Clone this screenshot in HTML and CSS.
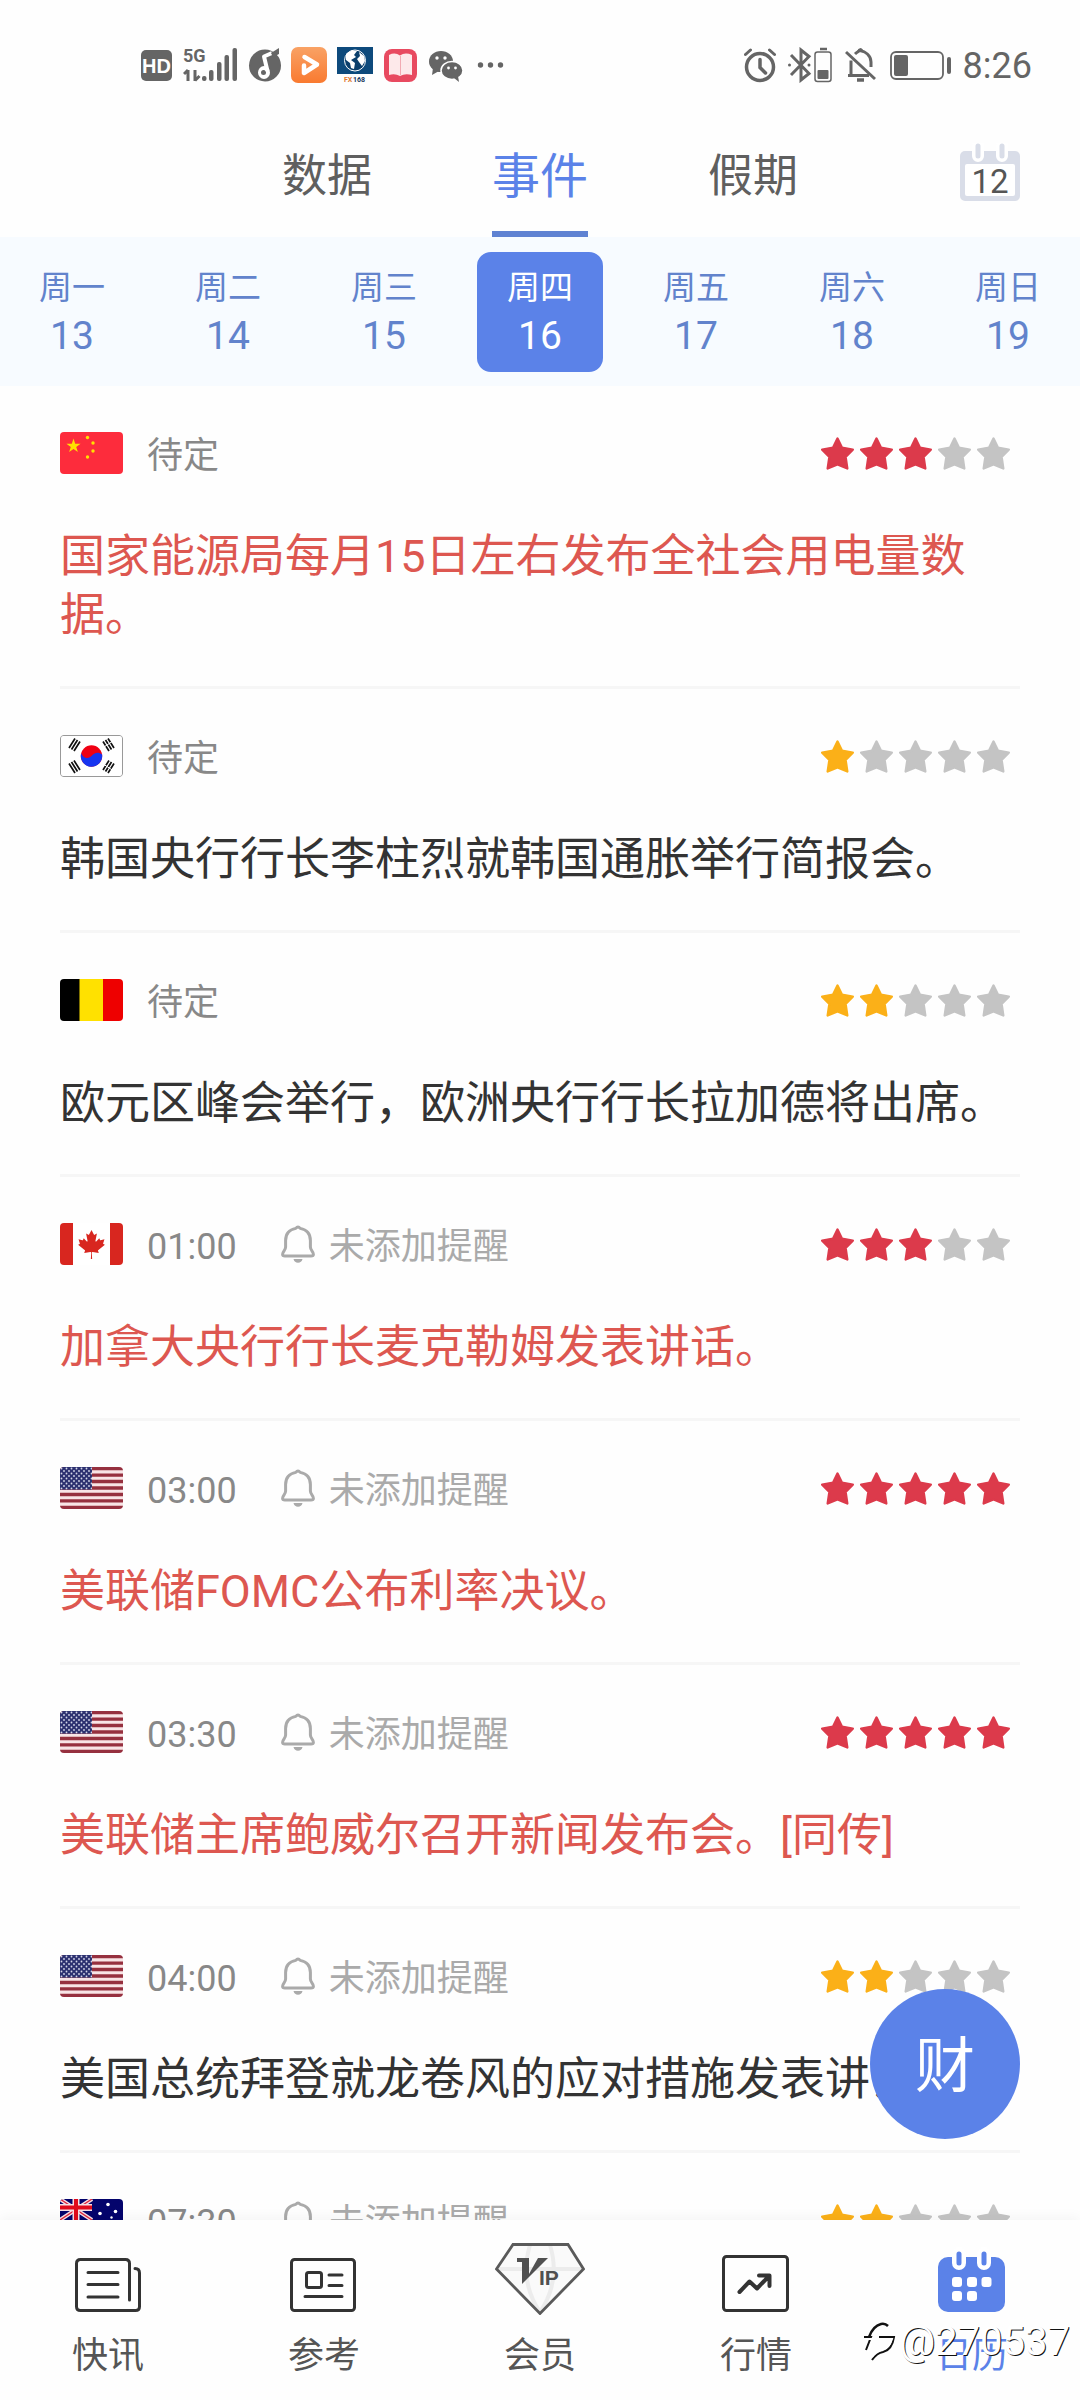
FILE: index.html
```html
<!DOCTYPE html>
<html lang="zh-CN">
<head>
<meta charset="utf-8">
<meta name="viewport" content="width=device-width, initial-scale=1">
<title>财经日历</title>
<link rel="stylesheet" href="styles.css">
</head>
<body>
<svg class="defs" width="0" height="0" aria-hidden="true">
  <defs>
    <symbol id="star" viewBox="0 0 33 33"><path d="M16.5 1.5L21 10.8L31.8 12.6L24.6 20L26.3 31.5L16.5 27.500L6.700 31.500L8.400 20L1.200 12.600L12 10.800Z" fill="currentColor" stroke="currentColor" stroke-width="2.400" stroke-linejoin="round"/></symbol>
    <symbol id="bell" viewBox="0 0 34 38"><g fill="none" stroke="currentColor" stroke-width="3" stroke-linecap="round" stroke-linejoin="round"><path d="M14.8 3.4Q17 .6 19.2 3.4C25.5 4.6 29.4 9 29.4 15.5V22C29.4 25.5 32.4 26.6 32.4 29.2Q32.4 31 30 31H4Q1.600 31 1.600 29.200C1.600 26.600 4.600 25.500 4.600 22V15.500C4.600 9 8.500 4.600 14.800 3.400Z"/></g><path d="M12.500 34H21.500Q20.500 37.800 17 37.800Q13.500 37.800 12.500 34Z" fill="currentColor"/></symbol>
    <pattern id="canton" width="5" height="5" patternUnits="userSpaceOnUse"><rect width="5" height="5" fill="#2d3170"/><circle cx="1.500" cy="1.500" r=".9" fill="#d5d7ea"/><circle cx="4" cy="4" r=".9" fill="#d5d7ea"/></pattern>
    <symbol id="flag-us" viewBox="0 0 63 42"><rect width="63" height="42" fill="#f8e4e6"/><path d="M0 1.600H63M0 8.100H63M0 14.500H63M0 21H63M0 27.500H63M0 33.900H63M0 40.400H63" stroke="#96303f" stroke-width="3.300"/><rect width="32" height="22.600" fill="url(#canton)"/></symbol>
  </defs>
</svg>
<div class="app">
  <header class="status">
    <div class="status-left">
      <svg width="32" height="36" viewBox="0 0 32 36"><rect y="3" width="31" height="31" rx="5" fill="#656565"/><text x="15.500" y="25.500" text-anchor="middle" font-size="20" font-weight="700" font-family="Liberation Sans, sans-serif" fill="#fff">HD</text></svg>
      <svg width="54" height="36" viewBox="0 0 54 36" fill="#656565"><text x="0" y="15" font-size="18" font-weight="700" font-family="Roboto, sans-serif">5G</text><path d="M5 23V34M5 23L1 27M12 23V34M12 33.500L16.500 29" stroke="#656565" stroke-width="3" fill="none"/><rect x="19" y="29" width="4.500" height="5" rx="2"/><rect x="26" y="23" width="4.500" height="11" rx="2"/><rect x="34" y="15" width="4.500" height="19" rx="2"/><rect x="41.500" y="8" width="4.500" height="26" rx="2"/><rect x="49.500" y="1" width="4.500" height="33" rx="2"/></svg>
      <svg width="34" height="36" viewBox="0 0 34 36"><circle cx="18" cy="18.500" r="16" fill="#656565"/><ellipse cx="17" cy="25.500" rx="6" ry="6.500" fill="#fff"/><circle cx="16.500" cy="25.500" r="2.500" fill="#656565"/><path d="M20.500 24L17 9.500L25 6" fill="none" stroke="#fff" stroke-width="4" stroke-linejoin="round"/><path d="M24 6L32 1V7L26 10Z" fill="#656565"/></svg>
      <svg width="36" height="36" viewBox="0 0 36 36"><defs><linearGradient id="orange" x2="0" y2="1"><stop stop-color="#f9a265"/><stop offset="1" stop-color="#f97a30"/></linearGradient></defs><rect width="36" height="36" rx="7" fill="url(#orange)"/><path d="M13.500 10L26 17.500L13 26V18.500" fill="none" stroke="#fff" stroke-width="4.500" stroke-linejoin="round" stroke-linecap="round"/></svg>
      <svg width="36" height="36" viewBox="0 0 36 36"><rect width="36" height="27" fill="#0d4a7c"/><circle cx="18" cy="13.500" r="10.500" fill="#0a3f6c" stroke="#fff" stroke-width="1"/><path d="M9 7Q14 2 20 4L17 8L19 10L14 13L18 16L17 22L14 21L13 16L9 13ZM22 5L27 9L28 14L25 19L22 15L20 12L23 9Z" fill="#fff"/><text x="7" y="35" font-size="7" font-weight="700" fill="#e07b33">FX</text><text x="16" y="35" font-size="7" font-weight="700" fill="#16365c">168</text></svg>
      <svg width="34" height="36" viewBox="0 0 34 36"><rect x="1" y="2" width="33" height="33" rx="8" fill="#e84a60"/><path d="M6 8Q12 5 17 8.500Q22 5 29 8V28Q22 26 17 29Q12 26 6 28Z" fill="#fde9ea"/><path d="M17.500 9V28" stroke="#f2aab2" stroke-width="1"/></svg>
      <svg width="36" height="36" viewBox="0 0 36 36" fill="#656565"><ellipse cx="14" cy="14.500" rx="12" ry="10.500"/><path d="M6 21L5 28L12 24Z"/><ellipse cx="25" cy="23.500" rx="11" ry="9" stroke="#fff" stroke-width="1.500"/><path d="M27 31L32 35L31 29Z"/><g fill="#fff"><circle cx="10" cy="11" r="1.700"/><circle cx="18" cy="11" r="1.700"/><circle cx="21.500" cy="21" r="1.400"/><circle cx="28.500" cy="21" r="1.400"/></g></svg>
      <svg width="32" height="36" viewBox="0 0 32 36" fill="#656565"><circle cx="7.500" cy="18" r="2.700"/><circle cx="17.500" cy="18" r="2.700"/><circle cx="27.500" cy="18" r="2.700"/></svg>
    </div>
    <div class="status-right">
      <svg width="32" height="36" viewBox="0 0 32 36" fill="none" stroke="#656565" stroke-linecap="round"><circle cx="16" cy="20" r="13.500" stroke-width="3.500"/><path d="M16 12.500V20.500L21.500 26" stroke-width="3.500"/><path d="M1.500 7.500L6.500 3M30.500 7.500L25.500 3" stroke-width="3"/></svg>
      <svg width="44" height="36" viewBox="0 0 44 36" fill="none" stroke="#656565"><path d="M3 8L21 26.500L13 33V3L21 9.500L3 28" stroke-width="3"/><circle cx="1.500" cy="18" r="1.500" fill="#656565" stroke="none"/><circle cx="21" cy="18" r="1.500" fill="#656565" stroke="none"/><rect x="27" y="5" width="16" height="29.500" rx="2.500" stroke-width="1.500"/><path d="M32 2H39" stroke-width="2.500"/><rect x="29.500" y="23" width="11" height="9" rx="1" fill="#656565" stroke="none"/></svg>
      <svg width="34" height="36" viewBox="0 0 34 36" fill="none" stroke="#656565" stroke-width="3"><path d="M4 28.500H25M7 27V13.500M11 7C13 5 14.500 4.500 16 3.500C21 4.500 27 8 27 15V20" stroke-linejoin="round"/><path d="M2 5L31 32"/><path d="M13 33H20" stroke-width="3.500"/><path d="M14.500 4.500Q16 1 18 4"/></svg>
      <svg width="61" height="36" viewBox="0 0 61 36"><rect x="1" y="5" width="52" height="27" rx="5" fill="none" stroke="#656565" stroke-width="1.800"/><rect x="4" y="8" width="14" height="21" rx="2" fill="#656565"/><rect x="57" y="10" width="4" height="17" rx="2" fill="#656565"/></svg>
      <span class="clock">8:26</span>
    </div>
  </header>

  <div class="topbar">
    <div class="tabs">
      <button class="tab" type="button">数据</button>
      <button class="tab tab-active" type="button">事件</button>
      <button class="tab" type="button">假期</button>
    </div>
    <button class="pick-date" type="button" aria-label="选择日期">
      <svg width="60" height="60" viewBox="0 0 60 60"><rect y="8" width="60" height="50" rx="5" fill="#d9dde8"/><rect x="5" y="21" width="50" height="32" rx="2" fill="#fff"/><g stroke-linecap="round"><path d="M18 2V13M42 2V13" stroke="#fff" stroke-width="12"/><path d="M18 3V13M42 3V13" stroke="#d9dde8" stroke-width="5"/></g><text x="30" y="50" text-anchor="middle" font-size="33" fill="#555">12</text></svg>
    </button>
  </div>

  <div class="week">
    <button class="day" type="button"><span class="day-name">周一</span><span class="day-num">13</span></button>
    <button class="day" type="button"><span class="day-name">周二</span><span class="day-num">14</span></button>
    <button class="day" type="button"><span class="day-name">周三</span><span class="day-num">15</span></button>
    <button class="day day-active" type="button"><span class="day-name">周四</span><span class="day-num">16</span></button>
    <button class="day" type="button"><span class="day-name">周五</span><span class="day-num">17</span></button>
    <button class="day" type="button"><span class="day-name">周六</span><span class="day-num">18</span></button>
    <button class="day" type="button"><span class="day-name">周日</span><span class="day-num">19</span></button>
  </div>

  <main class="events">
    <article class="event event-major">
      <div class="meta">
        <svg class="flag" viewBox="0 0 63 42"><rect width="63" height="42" fill="#fd2c3c"/><g fill="#ffe100"><path d="M13.500 6.500L15.200 11.700H20.600L16.200 14.900L17.900 20.100L13.500 16.900L9.100 20.100L10.800 14.900L6.400 11.700H11.800Z"/><circle cx="27.500" cy="5.500" r="1.700"/><circle cx="33" cy="11" r="1.700"/><circle cx="33" cy="19" r="1.700"/><circle cx="27.500" cy="25" r="1.700"/></g></svg>
        <span class="time">待定</span>
        <span class="stars stars-high" role="img" aria-label="3星"><svg class="on"><use href="#star"/></svg><svg class="on"><use href="#star"/></svg><svg class="on"><use href="#star"/></svg><svg><use href="#star"/></svg><svg><use href="#star"/></svg></span>
      </div>
      <h2 class="title">国家能源局每月15日左右发布全社会用电量数据。</h2>
    </article>

    <article class="event">
      <div class="meta">
        <svg class="flag" viewBox="0 0 63 42"><rect x=".5" y=".5" width="62" height="41" rx="2.500" fill="#fff" stroke="#999"/><circle cx="31.500" cy="21" r="10.700" fill="#f00013"/><path d="M21.200 18.200A10.700 10.700 0 1 0 42.100 19.500C38 16 34 18 31.500 21C28 24.500 23 23 21.200 18.200Z" fill="#1735f0"/><g stroke="#111" stroke-width="1.700"><path d="M9 13L15 3.500M11.500 14.500L17.500 5M14 16L20 6.500"/><path d="M43 6.500L49 16M45.500 5L51.500 14.500M48 3.500L54 13"/><path d="M9 28.500L15 38M11.500 27L17.500 36.500M14 25.500L20 35"/><path d="M43 35L49 25.500M45.500 36.500L51.500 27M48 38L54 28.500"/></g><path d="M44 12L53 6M44 29.500L53 35.500" stroke="#fff"/></svg>
        <span class="time">待定</span>
        <span class="stars" role="img" aria-label="1星"><svg class="on"><use href="#star"/></svg><svg><use href="#star"/></svg><svg><use href="#star"/></svg><svg><use href="#star"/></svg><svg><use href="#star"/></svg></span>
      </div>
      <h2 class="title">韩国央行行长李柱烈就韩国通胀举行简报会。</h2>
    </article>

    <article class="event">
      <div class="meta">
        <svg class="flag" viewBox="0 0 63 42"><rect width="20" height="42" fill="#000"/><rect x="19.500" width="24" height="42" fill="#ffe100"/><rect x="43" width="20" height="42" fill="#ee0000"/></svg>
        <span class="time">待定</span>
        <span class="stars" role="img" aria-label="2星"><svg class="on"><use href="#star"/></svg><svg class="on"><use href="#star"/></svg><svg><use href="#star"/></svg><svg><use href="#star"/></svg><svg><use href="#star"/></svg></span>
      </div>
      <h2 class="title">欧元区峰会举行，欧洲央行行长拉加德将出席。</h2>
    </article>

    <article class="event event-major">
      <div class="meta">
        <svg class="flag" viewBox="0 0 63 42"><rect width="63" height="42" fill="#fff"/><path d="M0 0H13V42H0ZM50 0H63V42H50Z" fill="#d8261f"/><path transform="translate(31.500 21.300) scale(.0072)" fill="#d8261f" d="m-90 2030 45-863a95 95 0 0 0-111-98l-859 151 116-320a65 65 0 0 0-20-73l-941-762 212-99a65 65 0 0 0 34-79l-186-572 542 115a65 65 0 0 0 73-38l105-247 423 454a65 65 0 0 0 111-57l-204-1052 327 189a65 65 0 0 0 91-27l332-652 332 652a65 65 0 0 0 91 27l327-189-204 1052a65 65 0 0 0 111 57l423-454 105 247a65 65 0 0 0 73 38l542-115-186 572a65 65 0 0 0 34 79l212 99-941 762a65 65 0 0 0-20 73l116 320-859-151a95 95 0 0 0-111 98l45 863z"/></svg>
        <span class="time">01:00</span>
        <button class="remind" type="button"><svg class="bell"><use href="#bell"/></svg><span class="remind-text">未添加提醒</span></button>
        <span class="stars stars-high" role="img" aria-label="3星"><svg class="on"><use href="#star"/></svg><svg class="on"><use href="#star"/></svg><svg class="on"><use href="#star"/></svg><svg><use href="#star"/></svg><svg><use href="#star"/></svg></span>
      </div>
      <h2 class="title">加拿大央行行长麦克勒姆发表讲话。</h2>
    </article>

    <article class="event event-major">
      <div class="meta">
        <svg class="flag"><use href="#flag-us"/></svg>
        <span class="time">03:00</span>
        <button class="remind" type="button"><svg class="bell"><use href="#bell"/></svg><span class="remind-text">未添加提醒</span></button>
        <span class="stars stars-high" role="img" aria-label="5星"><svg class="on"><use href="#star"/></svg><svg class="on"><use href="#star"/></svg><svg class="on"><use href="#star"/></svg><svg class="on"><use href="#star"/></svg><svg class="on"><use href="#star"/></svg></span>
      </div>
      <h2 class="title">美联储FOMC公布利率决议。</h2>
    </article>

    <article class="event event-major">
      <div class="meta">
        <svg class="flag"><use href="#flag-us"/></svg>
        <span class="time">03:30</span>
        <button class="remind" type="button"><svg class="bell"><use href="#bell"/></svg><span class="remind-text">未添加提醒</span></button>
        <span class="stars stars-high" role="img" aria-label="5星"><svg class="on"><use href="#star"/></svg><svg class="on"><use href="#star"/></svg><svg class="on"><use href="#star"/></svg><svg class="on"><use href="#star"/></svg><svg class="on"><use href="#star"/></svg></span>
      </div>
      <h2 class="title">美联储主席鲍威尔召开新闻发布会。[同传]</h2>
    </article>

    <article class="event">
      <div class="meta">
        <svg class="flag"><use href="#flag-us"/></svg>
        <span class="time">04:00</span>
        <button class="remind" type="button"><svg class="bell"><use href="#bell"/></svg><span class="remind-text">未添加提醒</span></button>
        <span class="stars" role="img" aria-label="2星"><svg class="on"><use href="#star"/></svg><svg class="on"><use href="#star"/></svg><svg><use href="#star"/></svg><svg><use href="#star"/></svg><svg><use href="#star"/></svg></span>
      </div>
      <h2 class="title">美国总统拜登就龙卷风的应对措施发表讲话。</h2>
    </article>

    <article class="event">
      <div class="meta">
        <svg class="flag" viewBox="0 0 63 42"><rect width="63" height="42" fill="#04046c"/><path d="M0 0L32 21M32 0L0 21" stroke="#f6dfe4" stroke-width="4"/><path d="M0 0L32 21M32 0L0 21" stroke="#e0233b" stroke-width="1.300"/><path d="M16 0V21M0 8.500H32" stroke="#f6dfe4" stroke-width="7"/><path d="M16 0V21M0 8.500H32" stroke="#e00a1c" stroke-width="4"/><g fill="#fff"><circle cx="48" cy="5.500" r="1.800"/><circle cx="40" cy="14.500" r="1.800"/><circle cx="55.500" cy="12.500" r="1.800"/><circle cx="51.500" cy="18.500" r="1.200"/><circle cx="48" cy="34" r="1.800"/><circle cx="16" cy="32" r="3.500"/></g></svg>
        <span class="time">07:30</span>
        <button class="remind" type="button"><svg class="bell"><use href="#bell"/></svg><span class="remind-text">未添加提醒</span></button>
        <span class="stars" role="img" aria-label="2星"><svg class="on"><use href="#star"/></svg><svg class="on"><use href="#star"/></svg><svg><use href="#star"/></svg><svg><use href="#star"/></svg><svg><use href="#star"/></svg></span>
      </div>
    </article>
  </main>

  <nav class="nav">
    <button class="fab" type="button">财</button>
    <a class="nav-item" href="#news"><svg class="nav-icon" viewBox="0 0 90 72" fill="none" stroke="#333" stroke-width="3" stroke-linecap="round" stroke-linejoin="round"><path d="M66.500 57V20.500Q66.500 16.500 62.500 16.500H17.500Q13.500 16.500 13.500 20.500V63.500Q13.500 67.500 17.500 67.500H72.500Q76.500 67.500 76.500 63.500V30Q76.500 25.500 72 25.500"/><path d="M25 29.500H55M25 41.500H55M25 54H55"/></svg>快讯</a>
    <a class="nav-item" href="#reference"><svg class="nav-icon" viewBox="0 0 90 72" fill="none" stroke="#333" stroke-width="3" stroke-linecap="round" stroke-linejoin="round"><rect x="12.500" y="16.500" width="63" height="51" rx="3"/><rect x="27.500" y="29.500" width="15" height="15" rx="2"/><path d="M50 32H63M50 42.500H63M26 53.500H63"/></svg>参考</a>
    <a class="nav-item" href="#member"><svg class="nav-icon" viewBox="0 0 90 72"><path d="M18 1.500H73L88.500 26L45 70.500L1.500 26Z" fill="#fafafa"/><path d="M3 26H87M35 2Q24 38 45 69Q66 38 55 2" fill="none" stroke="#ececec" stroke-width="4"/><path d="M18 1.500H73L88.500 26L45 70.500L1.500 26Z" fill="none" stroke="#5a5a5a" stroke-width="2.800"/><path d="M22 15H34V31L43 15H53L27 41V19H22Z" fill="#505050"/><text x="44" y="42" font-size="21" font-weight="700" fill="#505050" font-family="Liberation Sans, sans-serif">IP</text></svg>会员</a>
    <a class="nav-item" href="#market"><svg class="nav-icon" viewBox="0 0 90 72" fill="none" stroke="#333" stroke-linecap="round" stroke-linejoin="round"><rect x="12.500" y="13.500" width="64" height="54" rx="3" stroke-width="3"/><path d="M28.500 49L38.500 38.500L46 45.500L58 33M48 32.500H58.500V43" stroke-width="4"/></svg>行情</a>
    <a class="nav-item nav-active" href="#calendar"><svg class="nav-icon" viewBox="0 0 90 72"><rect x="11" y="14" width="67" height="55" rx="10" fill="#5b82e8"/><g stroke-linecap="round"><path d="M32 11V20M57 11V20" stroke="#fff" stroke-width="14"/><path d="M32 11V20M57 11V20" stroke="#5b82e8" stroke-width="5"/></g><g fill="#fff"><rect x="25" y="34" width="10" height="10" rx="3"/><rect x="40" y="34" width="10" height="10" rx="3"/><rect x="54.500" y="34" width="10" height="10" rx="3"/><rect x="25" y="48" width="10" height="10" rx="3"/><rect x="40" y="48" width="10" height="10" rx="3"/></g></svg>日历</a>
    <span class="watermark"><svg width="34" height="42" viewBox="0 0 34 42" fill="none"><path d="M6 16Q10 5 18 3Q22 2 25 5" stroke="#111" stroke-width="2.500"/><path d="M1 16H8L3 29M16 16H31Q29 29 20 31Q14 32 9 39" stroke="#111" stroke-width="2"/><path d="M3 18H10L5 31M17 18H29Q26 28 18 29Q13 30 9 36" stroke="#fff" stroke-width="2"/></svg>@270537</span>
  </nav>
</div>
</body>
</html>
```

FILE: styles.css
```css
* {
  box-sizing: border-box;
}

body {
  margin: 0;
  background: #fefefe;
  color: #333;
  font-family: Roboto, "Noto Sans CJK SC", sans-serif;
}

button {
  margin: 0;
  padding: 0;
  border: 0;
  background: none;
  color: inherit;
  font: inherit;
}

svg {
  display: block;
  flex: none;
}

.defs {
  position: absolute;
}

.app {
  display: flex;
  flex-direction: column;
  height: 100vh;
  overflow: hidden;
}

/* status bar */
.status {
  display: flex;
  flex: none;
  align-items: center;
  justify-content: space-between;
  height: 130px;
  padding: 0 48px 0 141px;
}

.status-left,
.status-right {
  display: flex;
  align-items: center;
}

.status-left {
  gap: 10px;
}

.status-right {
  gap: 12px;
}

.clock {
  padding-top: 2px;
  color: #656565;
  font-size: 36px;
  line-height: 36px;
}

/* tabs */
.topbar {
  display: grid;
  flex: none;
  grid-template-columns: 1fr auto 1fr;
}

.tabs {
  display: flex;
  grid-column: 2;
  gap: 120px;
}

.tab {
  height: 107px;
  padding-bottom: 7px;
  border-bottom: 6px solid transparent;
  color: #5f5f5f;
  font-size: 45px;
  line-height: 94px;
}

.tab-active {
  border-color: #5f82d2;
  color: #5b82e8;
  font-size: 48px;
}

.pick-date {
  align-self: start;
  justify-self: end;
  margin: 13px 60px 0 0;
}

/* week strip */
.week {
  display: grid;
  flex: none;
  grid-template-columns: repeat(7, 1fr);
  margin: 0 -6px;
  padding: 15px 0 14px;
  background: #f7fbff;
  color: #6283cc;
}

.day {
  display: flex;
  flex-direction: column;
  align-items: center;
  justify-self: center;
  width: 126px;
  height: 120px;
  padding-top: 12px;
  border-radius: 14px;
}

.day-active {
  background: #5b82e8;
  color: #fff;
}

.day-name,
.day-num {
  line-height: 48px;
}

.day-name {
  font-size: 33px;
}

.day-num {
  font-size: 39px;
}

/* event list */
.events {
  flex: 1;
  min-height: 0;
  overflow: hidden;
  padding: 0 60px;
}

.event {
  padding: 46px 0 41px;
  border-bottom: 3px solid #f6f6f6;
}

.meta {
  display: flex;
  align-items: center;
  height: 42px;
  margin-bottom: 53px;
}

.flag {
  width: 63px;
  height: 42px;
  border-radius: 4px;
  overflow: hidden;
}

.time,
.remind-text {
  padding-top: 6px;
  font-size: 36px;
  line-height: 42px;
}

.time {
  margin-left: 24px;
  color: #888;
}

.remind {
  display: flex;
  align-items: center;
  gap: 14px;
  margin-left: 44px;
  color: #aaa;
}

.bell {
  width: 34px;
  height: 38px;
}

.stars {
  display: flex;
  gap: 6px;
  margin-left: auto;
  padding-right: 10px;
  color: #c4c4c4;
}

.stars svg {
  width: 33px;
  height: 33px;
}

.stars .on {
  color: #fbb018;
}

.stars-high .on {
  color: #dc3a4b;
}

.title {
  margin: 0;
  font-size: 45px;
  font-weight: 400;
  line-height: 59px;
}

.event-major .title {
  color: #dd5750;
}

/* bottom navigation */
.nav {
  position: relative;
  display: grid;
  flex: none;
  grid-template-columns: repeat(5, 1fr);
  height: 180px;
  background: #fefefe;
  box-shadow: 0 -3px 12px rgba(0, 0, 0, 0.04);
}

.nav-item {
  display: flex;
  flex-direction: column;
  align-items: center;
  gap: 17px;
  padding-top: 23px;
  color: #555;
  font-size: 36px;
  line-height: 48px;
  text-decoration: none;
}

.nav-active {
  color: #5b82e8;
}

.nav-icon {
  width: 90px;
  height: 72px;
}

.fab {
  position: absolute;
  right: 60px;
  bottom: 261px;
  width: 150px;
  height: 150px;
  padding-top: 6px;
  border-radius: 50%;
  background: #5b82e8;
  color: #fff;
  font-size: 60px;
  line-height: 144px;
}

.watermark {
  position: absolute;
  top: 98px;
  right: 10px;
  display: flex;
  align-items: center;
  gap: 2px;
  color: #fff;
  font-size: 40px;
  line-height: 48px;
  text-shadow: 1px 1px 0 #111;
}
```
